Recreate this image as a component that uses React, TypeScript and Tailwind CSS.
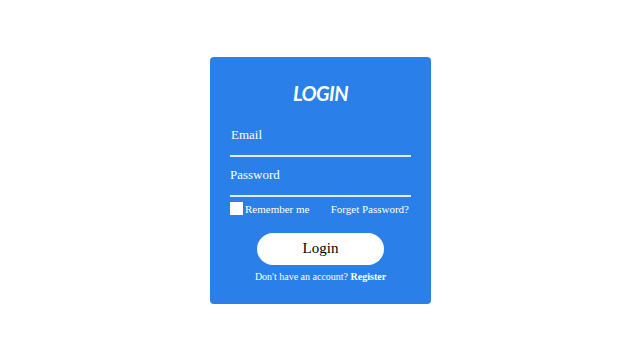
import React from "react";

export default function App() {
  return (
    <div className="w-[641px] h-[360px] bg-white flex items-center justify-center">
      <div className="w-[221px] h-[247px] bg-[#2b7fe8] rounded-[4px] flex flex-col px-[20px] pt-[24px] font-['Liberation_Serif',serif]">
        <div className="h-[24px] text-center text-white text-[20px] leading-[24px] font-bold italic tracking-[-0.5px] font-['Lato',sans-serif]">
          LOGIN
        </div>
        <div className="mt-[22px] h-[30px] border-b-[2px] border-[#e3eefc] text-white text-[13px] leading-[16px] pl-[1px]">
          Email
        </div>
        <div className="mt-[10px] h-[30px] border-b-[2px] border-[#e3eefc] text-white text-[13px] leading-[16px]">
          Password
        </div>
        <div className="mt-[5px] flex items-center justify-between text-white text-[11px] leading-[14px]">
          <div className="flex items-center">
            <div className="w-[13px] h-[13px] bg-white mr-[2px]" />
            <span>Remember me</span>
          </div>
          <span className="mr-[2px]">Forget Password?</span>
        </div>
        <div className="mt-[17px] flex justify-center">
          <div className="w-[127px] h-[32px] bg-white rounded-full flex items-center justify-center text-black text-[15px]">
            Login
          </div>
        </div>
        <div className="mt-[5px] text-center text-white text-[10px] leading-[14px]">
          Don't have an account? <span className="font-bold">Register</span>
        </div>
      </div>
    </div>
  );
}
